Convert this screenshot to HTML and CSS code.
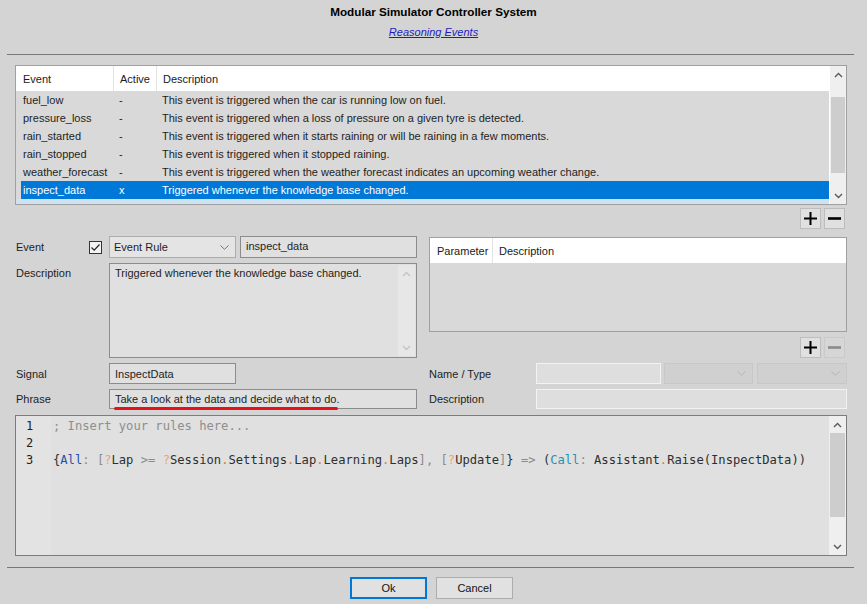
FILE: index.html
```html
<!DOCTYPE html>
<html>
<head>
<meta charset="utf-8">
<link rel="stylesheet" href="styles.css">
</head>
<body>
<div class="dialog">
  <div class="title">Modular Simulator Controller System</div>
  <div class="subtitle"><a href="#">Reasoning Events</a></div>
  <div class="rule"></div>

  <div class="events">
    <div class="list">
      <div class="list-head">
        <div class="hcell first">Event</div>
        <div class="hcell">Active</div>
        <div class="hcell">Description</div>
      </div>
      <div class="list-body">
        <div class="row"><span class="c1">fuel_low</span><span class="c2">-</span><span class="c3">This event is triggered when the car is running low on fuel.</span></div>
        <div class="row"><span class="c1">pressure_loss</span><span class="c2">-</span><span class="c3">This event is triggered when a loss of pressure on a given tyre is detected.</span></div>
        <div class="row"><span class="c1">rain_started</span><span class="c2">-</span><span class="c3">This event is triggered when it starts raining or will be raining in a few moments.</span></div>
        <div class="row"><span class="c1">rain_stopped</span><span class="c2">-</span><span class="c3">This event is triggered when it stopped raining.</span></div>
        <div class="row"><span class="c1">weather_forecast</span><span class="c2">-</span><span class="c3">This event is triggered when the weather forecast indicates an upcoming weather change.</span></div>
        <div class="row sel"><span class="c1">inspect_data</span><span class="c2">x</span><span class="c3">Triggered whenever the knowledge base changed.</span></div>
      </div>
      <div class="list-foot"></div>
    </div>
    <div class="vscroll">
      <div class="arrow"><svg width="9" height="6" viewBox="0 0 9 6"><path d="M1 5 L4.5 1.5 L8 5" fill="none" stroke="#5a5a5a" stroke-width="1.4"/></svg></div>
      <div class="track-gap events-gap"></div>
      <div class="thumb events-thumb"></div>
      <div class="track-fill"></div>
      <div class="arrow"><svg width="9" height="6" viewBox="0 0 9 6"><path d="M1 1 L4.5 4.5 L8 1" fill="none" stroke="#5a5a5a" stroke-width="1.4"/></svg></div>
    </div>
  </div>

  <div class="pm-row events-pm">
    <div class="pm"><svg width="15" height="15" viewBox="0 0 15 15"><path d="M7.5 1 V14 M1 7.5 H14" stroke="#000" stroke-width="2"/></svg></div>
    <div class="pm"><svg width="15" height="15" viewBox="0 0 15 15"><path d="M1 7.5 H14" stroke="#000" stroke-width="2.6"/></svg></div>
  </div>

  <div class="form">
    <div class="lbl event-lbl">
      <span>Event</span>
      <span class="check"><svg width="11" height="11" viewBox="0 0 11 11"><path d="M1.5 5.5 L4.2 8.2 L9.5 2.5" fill="none" stroke="#222" stroke-width="1.2"/></svg></span>
    </div>
    <div class="fields">
      <div class="select event-select"><span>Event Rule</span><svg width="9" height="5" viewBox="0 0 9 5"><path d="M0.5 0.5 L4.5 4.3 L8.5 0.5" fill="none" stroke="#777" stroke-width="1"/></svg></div>
      <div class="input name-input">inspect_data</div>
    </div>

    <div class="param-wrap">
      <div class="param-table">
        <div class="param-head">
          <div class="hcell first">Parameter</div>
          <div class="hcell">Description</div>
        </div>
        <div class="param-body"></div>
      </div>
      <div class="pm-row param-pm">
        <div class="pm"><svg width="15" height="15" viewBox="0 0 15 15"><path d="M7.5 1 V14 M1 7.5 H14" stroke="#000" stroke-width="2"/></svg></div>
        <div class="pm disabled"><svg width="15" height="15" viewBox="0 0 15 15"><path d="M1 7.5 H14" stroke="#8a8a8a" stroke-width="2.6"/></svg></div>
      </div>
    </div>

    <div class="lbl top">Description</div>
    <div class="textarea">
      <div class="ta-text">Triggered whenever the knowledge base changed.</div>
      <div class="ta-scroll">
        <svg width="9" height="6" viewBox="0 0 9 6"><path d="M1 5 L4.5 1.5 L8 5" fill="none" stroke="#c4c4c4" stroke-width="1.3"/></svg>
        <svg width="9" height="6" viewBox="0 0 9 6"><path d="M1 1 L4.5 4.5 L8 1" fill="none" stroke="#c4c4c4" stroke-width="1.3"/></svg>
      </div>
    </div>

    <div class="lbl">Signal</div>
    <div class="fields"><div class="input signal-input">InspectData</div></div>
    <div class="lbl rlbl">Name / Type</div>
    <div class="fields">
      <div class="input pale type-name"></div>
      <div class="select disabled-select type-a"><svg width="9" height="5" viewBox="0 0 9 5"><path d="M0.5 0.5 L4.5 4.3 L8.5 0.5" fill="none" stroke="#b4b4b4" stroke-width="1"/></svg></div>
      <div class="select disabled-select type-b"><svg width="9" height="5" viewBox="0 0 9 5"><path d="M0.5 0.5 L4.5 4.3 L8.5 0.5" fill="none" stroke="#b4b4b4" stroke-width="1"/></svg></div>
    </div>

    <div class="lbl">Phrase</div>
    <div class="fields"><div class="input phrase-input">Take a look at the data and decide what to do.<span class="redline"></span></div></div>
    <div class="lbl rlbl">Description</div>
    <div class="fields"><div class="input pale param-desc"></div></div>
  </div>

  <div class="editor">
    <div class="gutter">
      <div>1</div><div>2</div><div>3</div>
    </div>
    <div class="code">
      <div class="line cm">; Insert your rules here...</div>
      <div class="line">&nbsp;</div>
      <div class="line"><span class="d">{</span><span class="kw">All</span><span class="g">:</span> <span class="g">[</span><span class="q">?</span><span class="d">Lap</span> <span class="g">&gt;=</span> <span class="q">?</span><span class="d">Session</span><span class="o">.</span><span class="d">Settings</span><span class="o">.</span><span class="d">Lap</span><span class="o">.</span><span class="d">Learning</span><span class="o">.</span><span class="d">Laps</span><span class="g">]</span><span class="g">,</span> <span class="g">[</span><span class="q">?</span><span class="d">Update</span><span class="g">]</span><span class="d">}</span> <span class="g">=&gt;</span> <span class="d">(</span><span class="kw2">Call</span><span class="g">:</span> <span class="d">Assistant</span><span class="o">.</span><span class="d">Raise(InspectData))</span></div>
    </div>
    <div class="vscroll ed-scroll">
      <div class="arrow"><svg width="9" height="6" viewBox="0 0 9 6"><path d="M1 5 L4.5 1.5 L8 5" fill="none" stroke="#5a5a5a" stroke-width="1.4"/></svg></div>
      <div class="thumb ed-thumb"></div>
      <div class="track-fill"></div>
      <div class="arrow"><svg width="9" height="6" viewBox="0 0 9 6"><path d="M1 1 L4.5 4.5 L8 1" fill="none" stroke="#5a5a5a" stroke-width="1.4"/></svg></div>
    </div>
  </div>

  <div class="rule bottom-rule"></div>

  <div class="buttons">
    <div class="btn default">Ok</div>
    <div class="btn">Cancel</div>
  </div>
</div>
</body>
</html>
```
FILE: styles.css
```css
* { box-sizing: border-box; }

body {
  margin: 0;
  width: 867px;
  height: 604px;
  overflow: hidden;
  background: #d4d4d4;
  font-family: "Liberation Sans", Arial, sans-serif;
  font-size: 11px;
  color: #1e1e1e;
}

.dialog { padding-top: 4px; }

.title {
  text-align: center;
  font-weight: bold;
  font-size: 11.7px;
  line-height: 16px;
  color: #000;
}

.subtitle {
  text-align: center;
  margin-top: 4px;
  line-height: 16px;
}

.subtitle a {
  color: #1c1cc0;
  font-style: italic;
  text-decoration: underline;
}

.rule {
  margin: 14px 13px 0 7px;
  height: 1px;
  background: #777;
}

/* events list */
.events {
  margin: 10px 0 0 15px;
  width: 832px;
  height: 140px;
  border: 1px solid #a0a0a0;
  display: flex;
}

.list {
  flex: 1;
  display: flex;
  flex-direction: column;
}

.list-head {
  height: 25px;
  background: #fff;
  display: grid;
  grid-template-columns: 97px 43px 1fr;
}

.hcell {
  display: flex;
  align-items: center;
  padding-left: 6px;
  border-left: 1px solid #e3e3e3;
  color: #1a1a1a;
}

.hcell.first {
  border-left: none;
  padding-left: 7px;
}

.list-body {
  height: 108px;
  background: #d9d9d9;
  padding-left: 5px;
}

.row {
  height: 18px;
  display: grid;
  grid-template-columns: 92px 43px 1fr;
  align-items: center;
  white-space: nowrap;
}

.row .c1 { padding-left: 2px; }
.row .c2 { padding-left: 6px; }
.row .c3 { padding-left: 6px; }

.row.sel {
  background: #0078d7;
  color: #fff;
}

.list-foot {
  flex: 1;
  background: #cfe2f1;
}

.vscroll {
  width: 17px;
  background: #efefef;
  border-left: 1px solid #fff;
  display: flex;
  flex-direction: column;
}

.arrow {
  height: 17px;
  display: flex;
  align-items: center;
  justify-content: center;
  flex: none;
}

.events-gap { height: 14px; flex: none; }
.thumb { background: #cdcdcd; flex: none; margin: 0 1px; }
.events-thumb { height: 76px; }
.track-fill { flex: 1; }

/* plus / minus */
.pm-row {
  display: flex;
  justify-content: flex-end;
  gap: 3px;
}

.events-pm {
  margin: 3px 22px 0 0;
}

.pm {
  width: 21px;
  height: 21px;
  background: #e0e0e0;
  border: 1px solid #bdbdbd;
  display: flex;
  align-items: center;
  justify-content: center;
}

.pm.disabled {
  background: #d6d6d6;
  border-color: #cacaca;
}

/* form */
.form {
  margin: 7px 0 0 15px;
  display: grid;
  grid-template-columns: 94px 308px 119px 311px;
  grid-template-rows: 22px 95px 21px 20px;
  row-gap: 5px;
}

.lbl {
  display: flex;
  align-items: center;
  padding-left: 1px;
  color: #1e1e1e;
}

.lbl.top {
  align-items: flex-start;
  padding-top: 4px;
}

.rlbl { padding-left: 12px; }

.event-lbl { justify-content: space-between; }

.check {
  width: 13px;
  height: 13px;
  margin-right: 7px;
  border: 1px solid #333;
  background: #f3f3f3;
  display: flex;
  align-items: center;
  justify-content: center;
}

.fields {
  display: flex;
  gap: 4px;
  align-items: stretch;
}

.select {
  display: flex;
  align-items: center;
  justify-content: space-between;
  padding: 0 6px 0 4px;
  background: #e4e4e4;
  border: 1px solid #adadad;
}

.event-select { width: 127px; }

.input {
  position: relative;
  display: flex;
  align-items: center;
  padding-left: 5px;
  background: #e0e0e0;
  border: 1px solid #8c8c8c;
  white-space: nowrap;
}

.name-input {
  width: 177px;
  align-items: flex-start;
  padding-top: 3px;
}

.signal-input { width: 127px; }
.phrase-input { width: 308px; }

.redline {
  position: absolute;
  left: 4px;
  top: 17px;
  width: 224px;
  height: 3px;
  border-radius: 2px;
  background: #e3121c;
}

.pale {
  border-color: #f2f2f2;
  background: #dedede;
}

.type-name { width: 125px; margin-right: -1px; }
.param-desc { width: 311px; }

.disabled-select {
  background: #d0d0d0;
  border-color: #c8c8c8;
  justify-content: flex-end;
}

.type-a { width: 89px; }
.type-b { width: 90px; }

.textarea {
  display: flex;
  background: #e0e0e0;
  border: 1px solid #8c8c8c;
}

.ta-text {
  flex: 1;
  padding: 3px 5px;
  line-height: 13px;
}

.ta-scroll {
  width: 17px;
  margin: 1px;
  background: #e7e7e7;
  display: flex;
  flex-direction: column;
  align-items: center;
  justify-content: space-between;
  padding: 6px 0 5px;
}

/* parameter table */
.param-wrap {
  grid-column: 3 / 5;
  grid-row: 1 / 3;
  margin-left: 12px;
  display: flex;
  flex-direction: column;
}

.param-table {
  margin-top: 1px;
  height: 95px;
  border: 1px solid #a0a0a0;
  display: flex;
  flex-direction: column;
}

.param-head {
  height: 25px;
  background: #fff;
  display: grid;
  grid-template-columns: 62px 1fr;
}

.param-body {
  flex: 1;
  background: #d9d9d9;
}

.param-pm {
  margin: 5px 2px 0 0;
}

/* editor */
.editor {
  margin: 6px 0 0 15px;
  width: 832px;
  height: 141px;
  border: 1px solid #7c7c7c;
  display: flex;
  background: #e0e0e0;
}

.gutter {
  width: 35px;
  background: #e3e3e3;
  padding: 2px 0 0 10px;
  font-family: "DejaVu Sans Mono", "Liberation Mono", monospace;
  font-size: 12px;
  line-height: 17px;
  color: #222;
}

.code {
  flex: 1;
  padding: 2px 0 0 2px;
  font-family: "DejaVu Sans Mono", "Liberation Mono", monospace;
  font-size: 12.15px;
  line-height: 17px;
  color: #333;
}

.line { white-space: pre; height: 17px; }

.cm { color: #8e8e8e; }
.d { color: #2e2e2e; }
.g { color: #8a8a8a; }
.q { color: #e8a66a; }
.o { color: #e07a2a; }
.kw { color: #1f4fa6; }
.kw2 { color: #2a8fae; }

.ed-scroll { border-left: none; }
.ed-thumb { height: 84px; }

/* bottom */
.bottom-rule { margin-top: 11px; }

.buttons {
  margin-top: 9px;
  display: flex;
  justify-content: center;
  gap: 9px;
  padding-right: 4px;
}

.btn {
  width: 77px;
  height: 22px;
  display: flex;
  align-items: center;
  justify-content: center;
  background: #e1e1e1;
  border: 1px solid #adadad;
  color: #111;
}

.btn.default {
  border: 2px solid #0078d7;
}
```
